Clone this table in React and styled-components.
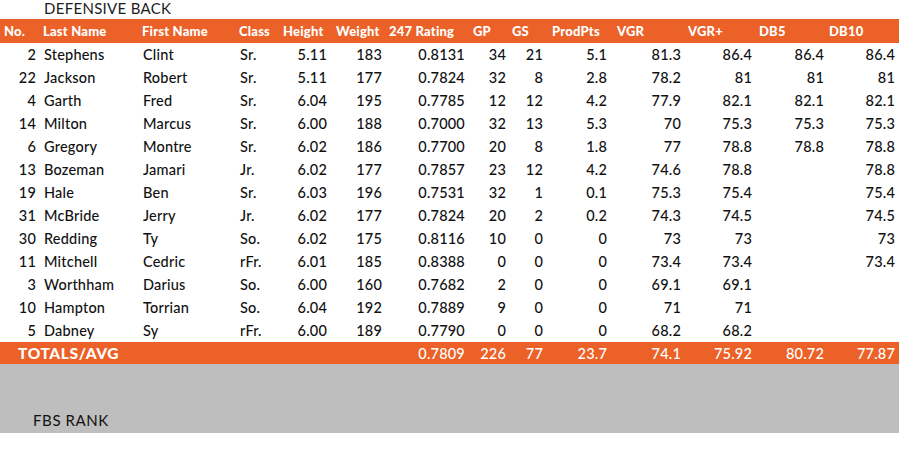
import React from "react";
import styled, { createGlobalStyle } from "styled-components";

const GlobalStyle = createGlobalStyle`
  body {
    margin: 0;
    background: #ffffff;
    font-family: Lato, "Noto Sans", sans-serif;
  }
`;

const COLUMNS = "40px 99px 97px 44px 51px 55px 83px 41px 37px 64px 74px 71px 72px 71px";

const Sheet = styled.div`
  width: 899px;
  color: #111;
`;

const Title = styled.div`
  height: 19px;
  padding-left: 44px;
  font-size: 15px;
  line-height: 17px;
  color: #1c1c1c;
  letter-spacing: 0.3px;
`;

const Row = styled.div`
  display: grid;
  grid-template-columns: ${COLUMNS};
  align-items: center;
  height: ${({ $h }) => $h || 23}px;
  background: ${({ $orange }) => ($orange ? "#eb6127" : "transparent")};
  color: ${({ $orange }) => ($orange ? "#ffffff" : "#111")};
`;

const HeadCell = styled.div`
  font-size: 13px;
  font-weight: 900;
  letter-spacing: 0.2px;
  padding-left: ${({ $pad }) => ($pad != null ? $pad : 3)}px;
  white-space: nowrap;
`;

const Cell = styled.div`
  font-size: 14.5px;
  font-weight: 500;
  letter-spacing: 0.2px;
  white-space: nowrap;
  text-align: ${({ $left }) => ($left ? "left" : "right")};
  padding: ${({ $left }) => ($left ? "0 0 0 4px" : "0 4px 0 0")};
`;

const TotalLabel = styled.div`
  grid-column: span 6;
  padding-left: 18px;
  font-size: 15.5px;
  font-weight: 900;
  letter-spacing: 0.6px;
`;

const Footer = styled.div`
  height: 69px;
  background: #bebebe;
  display: flex;
  align-items: flex-end;
  padding: 0 0 4px 33px;
  box-sizing: border-box;
  font-size: 15px;
  letter-spacing: 0.6px;
  color: #111;
`;

const headers = [
  ["No.", 4], ["Last Name", 3], ["First Name", 3], ["Class", 3], ["Height", 3],
  ["Weight", 5], ["247 Rating", 3], ["GP", 4], ["GS", 2], ["ProdPts", 5],
  ["VGR", 6], ["VGR+", 3], ["DB5", 3], ["DB10", 1],
];

const players = [
  [2, "Stephens", "Clint", "Sr.", "5.11", 183, "0.8131", 34, 21, "5.1", "81.3", "86.4", "86.4", "86.4"],
  [22, "Jackson", "Robert", "Sr.", "5.11", 177, "0.7824", 32, 8, "2.8", "78.2", "81", "81", "81"],
  [4, "Garth", "Fred", "Sr.", "6.04", 195, "0.7785", 12, 12, "4.2", "77.9", "82.1", "82.1", "82.1"],
  [14, "Milton", "Marcus", "Sr.", "6.00", 188, "0.7000", 32, 13, "5.3", "70", "75.3", "75.3", "75.3"],
  [6, "Gregory", "Montre", "Sr.", "6.02", 186, "0.7700", 20, 8, "1.8", "77", "78.8", "78.8", "78.8"],
  [13, "Bozeman", "Jamari", "Jr.", "6.02", 177, "0.7857", 23, 12, "4.2", "74.6", "78.8", "", "78.8"],
  [19, "Hale", "Ben", "Sr.", "6.03", 196, "0.7531", 32, 1, "0.1", "75.3", "75.4", "", "75.4"],
  [31, "McBride", "Jerry", "Jr.", "6.02", 177, "0.7824", 20, 2, "0.2", "74.3", "74.5", "", "74.5"],
  [30, "Redding", "Ty", "So.", "6.02", 175, "0.8116", 10, 0, "0", "73", "73", "", "73"],
  [11, "Mitchell", "Cedric", "rFr.", "6.01", 185, "0.8388", 0, 0, "0", "73.4", "73.4", "", "73.4"],
  [3, "Worthham", "Darius", "So.", "6.00", 160, "0.7682", 2, 0, "0", "69.1", "69.1", "", ""],
  [10, "Hampton", "Torrian", "So.", "6.04", 192, "0.7889", 9, 0, "0", "71", "71", "", ""],
  [5, "Dabney", "Sy", "rFr.", "6.00", 189, "0.7790", 0, 0, "0", "68.2", "68.2", "", ""],
];

// text columns: last name, first name, class
const leftCols = [1, 2, 3];

const totals = ["0.7809", "226", "77", "23.7", "74.1", "75.92", "80.72", "77.87"];

export default function App() {
  return (
    <>
      <GlobalStyle />
      <Sheet>
        <Title>DEFENSIVE BACK</Title>
        <Row $orange $h={24}>
          {headers.map(([label, pad]) => (
            <HeadCell key={label} $pad={pad}>{label}</HeadCell>
          ))}
        </Row>
        {players.map((p) => (
          <Row key={p[1]}>
            {p.map((v, i) => (
              <Cell key={i} $left={leftCols.includes(i)}>{v}</Cell>
            ))}
          </Row>
        ))}
        <Row $orange $h={22}>
          <TotalLabel>TOTALS/AVG</TotalLabel>
          {totals.map((v, i) => (
            <Cell key={i}>{v}</Cell>
          ))}
        </Row>
        <Footer>FBS RANK</Footer>
      </Sheet>
    </>
  );
}
